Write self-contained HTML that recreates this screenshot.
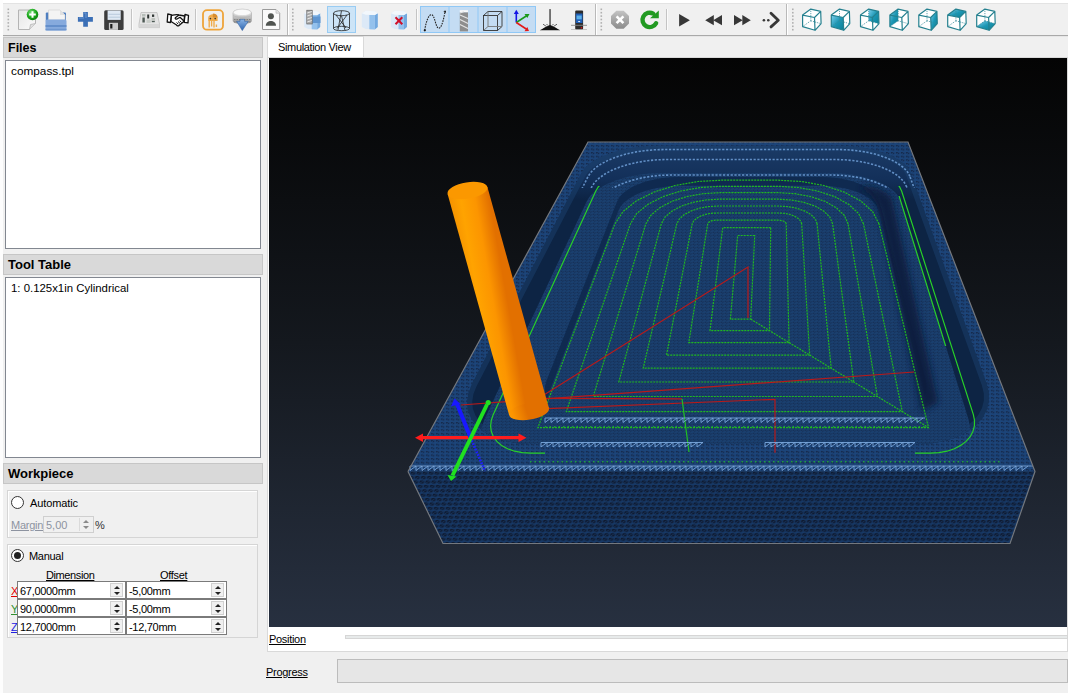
<!DOCTYPE html>
<html><head><meta charset="utf-8">
<style>
*{margin:0;padding:0;box-sizing:border-box}
html,body{width:1068px;height:693px;overflow:hidden;background:#f0f0f0;font-family:"Liberation Sans",sans-serif;font-size:11px;color:#000}
.a{position:absolute}
.t{position:absolute;white-space:pre;line-height:1}
.hdr{position:absolute;background:#d9d9d9;border:1px solid #c6c6c6}
.hdr span{position:absolute;left:4px;top:2px;font-weight:bold;font-size:13px;letter-spacing:0}
.list{position:absolute;background:#fff;border:1px solid #828790}
.grp{position:absolute;border:1px solid #d5d5d5;box-shadow:inset 1px 1px 0 #fff}
.radio{position:absolute;width:13px;height:13px;border-radius:50%;border:1px solid #333;background:#fff}
.spin{position:absolute;height:18px;background:#fff;border:1px solid #7a7a7a}
.spin .tx{position:absolute;left:2px;top:3px;font-size:11px;letter-spacing:-0.3px;white-space:pre}
.sb{position:absolute;right:2px;top:1px;width:13px;height:14px;background:#f0f0f0;border:1px solid #d0d0d0}
.sb:before{content:"";position:absolute;left:3px;top:2px;border-left:3px solid transparent;border-right:3px solid transparent;border-bottom:3px solid #222}
.sb:after{content:"";position:absolute;left:3px;top:8px;border-left:3px solid transparent;border-right:3px solid transparent;border-top:3px solid #222}
.u{text-decoration:underline}
.tb{position:absolute}
</style></head>
<body>
<!-- top strip -->
<div class="a" style="left:0;top:0;width:1068px;height:3px;background:#fff"></div>
<div class="a" style="left:0;top:3px;width:1068px;height:1px;background:#e3e3e3"></div>
<div class="a" style="left:0;top:35px;width:1068px;height:1px;background:#a9a9a9"></div>
<div class="a" style="left:0;top:36px;width:1068px;height:1px;background:#e6e6e6"></div>
<svg class="a" style="left:0;top:0" width="1068" height="36" viewBox="0 0 1068 36">
<defs>
<linearGradient id="gdoc" x1="0" y1="0" x2="1" y2="1"><stop offset="0" stop-color="#e6e6e6"/><stop offset="1" stop-color="#fbfbfb"/></linearGradient>
<radialGradient id="ggreen" cx="0.4" cy="0.35" r="0.7"><stop offset="0" stop-color="#7ee07e"/><stop offset="0.6" stop-color="#19a619"/><stop offset="1" stop-color="#0c7a0c"/></radialGradient>
<linearGradient id="gstop" x1="0" y1="0" x2="0" y2="1"><stop offset="0" stop-color="#c4c4c4"/><stop offset="0.5" stop-color="#a6a6a6"/><stop offset="1" stop-color="#8c8c8c"/></linearGradient>
<linearGradient id="gcube" x1="0" y1="0" x2="1" y2="1"><stop offset="0" stop-color="#7fd0ee"/><stop offset="0.5" stop-color="#1c97b4"/><stop offset="1" stop-color="#0b7f96"/></linearGradient>
<linearGradient id="gdb" x1="0" y1="0" x2="0" y2="1"><stop offset="0" stop-color="#f4f4f4"/><stop offset="0.5" stop-color="#c8c8c8"/><stop offset="1" stop-color="#8a8a8a"/></linearGradient>
<linearGradient id="garrow" x1="0" y1="0" x2="0" y2="1"><stop offset="0" stop-color="#8ab4e4"/><stop offset="1" stop-color="#2d64b0"/></linearGradient>
<linearGradient id="gcyl" x1="0" y1="0" x2="1" y2="0"><stop offset="0" stop-color="#e3eefa"/><stop offset="0.35" stop-color="#d2e4f6"/><stop offset="0.4" stop-color="#9cc6ee"/><stop offset="1" stop-color="#7fb2e6"/></linearGradient>
<g id="grip"><rect x="0" y="0" width="1.6" height="1.6" fill="#b0b0b0"/><rect x="0" y="3.4" width="1.6" height="1.6" fill="#b0b0b0"/><rect x="0" y="6.8" width="1.6" height="1.6" fill="#b0b0b0"/><rect x="0" y="10.2" width="1.6" height="1.6" fill="#b0b0b0"/><rect x="0" y="13.6" width="1.6" height="1.6" fill="#b0b0b0"/><rect x="0" y="17" width="1.6" height="1.6" fill="#b0b0b0"/><rect x="0" y="20.4" width="1.6" height="1.6" fill="#b0b0b0"/></g>
</defs>
<rect x="0" y="4" width="1068" height="31" fill="#f0f0f0"/>
<line x1="287.5" y1="4" x2="287.5" y2="35" stroke="#b9b9b9" stroke-width="1"/><line x1="288.5" y1="4" x2="288.5" y2="35" stroke="#ffffff" stroke-width="1"/>
<line x1="595.5" y1="4" x2="595.5" y2="35" stroke="#b9b9b9" stroke-width="1"/><line x1="596.5" y1="4" x2="596.5" y2="35" stroke="#ffffff" stroke-width="1"/>
<line x1="786.5" y1="4" x2="786.5" y2="35" stroke="#b9b9b9" stroke-width="1"/><line x1="787.5" y1="4" x2="787.5" y2="35" stroke="#ffffff" stroke-width="1"/>
<use href="#grip" x="7.5" y="8.5"/>
<use href="#grip" x="292" y="8.5"/>
<use href="#grip" x="600.5" y="8.5"/>
<use href="#grip" x="792" y="8.5"/>
<line x1="131.5" y1="9" x2="131.5" y2="30" stroke="#c4c4c4" stroke-width="1"/><line x1="132.5" y1="9" x2="132.5" y2="30" stroke="#fbfbfb" stroke-width="1"/>
<line x1="195.5" y1="9" x2="195.5" y2="30" stroke="#c4c4c4" stroke-width="1"/><line x1="196.5" y1="9" x2="196.5" y2="30" stroke="#fbfbfb" stroke-width="1"/>
<line x1="416.5" y1="9" x2="416.5" y2="30" stroke="#c4c4c4" stroke-width="1"/><line x1="417.5" y1="9" x2="417.5" y2="30" stroke="#fbfbfb" stroke-width="1"/>
<line x1="666.5" y1="9" x2="666.5" y2="30" stroke="#c4c4c4" stroke-width="1"/><line x1="667.5" y1="9" x2="667.5" y2="30" stroke="#fbfbfb" stroke-width="1"/>
<path d="M18.5,10 H32 L35.5,13.5 V23.5 L29.5,29.5 H18.5 Z" fill="url(#gdoc)" stroke="#b4b4b4" stroke-width="1"/>
<path d="M29.5,29.5 L30.5,24.5 L35.5,23.5" fill="#e0e0e0" stroke="#b4b4b4" stroke-width="0.8"/>
<circle cx="32.5" cy="14.5" r="5.8" fill="url(#ggreen)"/>
<path d="M32.5,11.2 V17.8 M29.2,14.5 H35.8" stroke="#fff" stroke-width="2"/>
<rect x="45.8" y="12.5" width="20.2" height="9" rx="1" fill="#4f7fc0"/>
<path d="M48.5,10 H60 L65,15 V20 H48.5 Z" fill="#f4f4f4" stroke="#d0d0d0" stroke-width="0.6"/>
<path d="M60,10 V15 H65" fill="#e0e0e0"/>
<rect x="45.5" y="19.6" width="21" height="10.8" rx="1.5" fill="#86aadd"/>
<rect x="45.5" y="25.2" width="21" height="1.6" fill="#5d89c6"/>
<rect x="45.5" y="28.8" width="21" height="1.6" fill="#6f97cf"/>
<path d="M83.2,12 H87.9 V17 H92.9 V21.7 H87.9 V26.7 H83.2 V21.7 H77.9 V17 H83.2 Z" fill="#3b6fb6"/>
<path d="M84,13 H86 V18 M79,18 H84" stroke="#7aa2d8" stroke-width="0.8" fill="none"/>
<rect x="104.2" y="10.2" width="19.4" height="19.7" rx="1.5" fill="#3c3c3c"/>
<rect x="107.6" y="10.5" width="13.1" height="9.4" fill="#dfe9f4"/>
<path d="M108.5,14.3 H120 M108.5,17.2 H120" stroke="#a9bdd3" stroke-width="0.7"/>
<rect x="108.9" y="22.8" width="9.1" height="7.1" fill="#c9c9c9"/>
<rect x="110.2" y="24" width="2.2" height="4.5" fill="#1a1a1a"/>
<path d="M141,12.5 H157 L159.5,24 V27.6 H139 V24 Z" fill="#e4e4e4" stroke="#b8b8b8" stroke-width="0.7"/>
<rect x="139" y="24" width="20.5" height="3.6" fill="#d6d6d6"/>
<rect x="142" y="14" width="3.5" height="2.5" fill="#b7beb9"/><rect x="142.4" y="17.5" width="2.4" height="5" fill="#4e5a55"/>
<rect x="147.2" y="14.5" width="2" height="4" fill="#2f3533"/><rect x="146.5" y="19.5" width="4.2" height="3.4" fill="#c8ccc8"/>
<rect x="152" y="14.5" width="2.2" height="2.4" fill="#2f3533"/><rect x="151.5" y="18" width="3.6" height="3" fill="#c0c4c0"/><rect x="151.8" y="21" width="3" height="1.2" fill="#4e5a55"/>
<g fill="#fff" stroke="#111" stroke-width="1.3" stroke-linejoin="round">
<path d="M167.8,14 L171.5,14.8 L170.5,22.5 L167.2,22 Z"/>
<path d="M188.5,15.4 L185,14.5 L184.2,22.3 L188,22.8 Z"/>
<path d="M171.4,15.5 C174,15 176,14.2 179,15 L184.6,16 L183.8,21.5 L179,25.5 C178,26.3 176.8,25.8 176.6,25 L171,21.5 Z"/>
<path d="M179,15 L175.3,17.8 C174.8,18.6 176,19.5 177,19 L180,17.3 L184.5,21.5" fill="none"/>
<path d="M176.5,22.5 L178.2,24 M178,21.5 L180,23.4 M179.6,20.5 L181.5,22.4" fill="none" stroke-width="1"/>
</g>
<rect x="203" y="10.1" width="20" height="19.6" rx="4" fill="none" stroke="#eea43a" stroke-width="1.8"/>
<path d="M208.2,17.8 C208.2,13 217.6,13 217.6,17.8 Z" fill="#f0ab4a"/>
<path d="M212.9,13.6 C215.5,13.6 217.6,15 217.6,17.8 H212.9 Z" fill="#d88d2e"/>
<rect x="208.2" y="17.6" width="9.4" height="3.4" fill="#f0ab4a"/>
<circle cx="210.4" cy="18.6" r="0.8" fill="#333"/><circle cx="215.2" cy="18.6" r="0.8" fill="#333"/>
<path d="M209.2,21 V27.5 M211.6,21 V26.5 M214,21 V27.5 M216.4,24.5 V27" stroke="#f0ab4a" stroke-width="1.4"/>
<path d="M233,13 C233,8 251.5,8 251.5,13 V21 C251.5,24.5 233,24.5 233,21 Z" fill="url(#gdb)" stroke="#a8a8a8" stroke-width="0.6"/>
<ellipse cx="242.2" cy="12.4" rx="8.8" ry="3.2" fill="#fafafa" stroke="#cfcfcf" stroke-width="0.5"/>
<path d="M233.3,15.5 C236,18 248.5,18 251.2,15.5" fill="none" stroke="#b5b5b5" stroke-width="0.7"/>
<path d="M234,19.5 H250.5 M234,22 H250.5" stroke="#777" stroke-width="0.8" stroke-dasharray="1.5,1"/>
<path d="M240,19.3 H244.6 V21.3 H248.3 L242.3,30.6 L236.6,21.3 H240 Z" fill="url(#garrow)" stroke="#2a5a9e" stroke-width="0.5"/>
<path d="M262.5,9.5 H276 L279.7,13.2 V29.5 H262.5 Z" fill="#fafafa" stroke="#9a9a9a" stroke-width="1"/>
<path d="M276,9.5 V13.2 H279.7" fill="#e6e6e6" stroke="#b0b0b0" stroke-width="0.6"/>
<circle cx="270.9" cy="16.2" r="3" fill="#505450"/>
<path d="M265.8,25.8 C265.8,19.5 276,19.5 276,25.8 Z" fill="#505450"/>
<path d="M304.2,13.3 L308.2,10.8 L317.2,11.3 L320.2,13.3 V26.9 L317.2,29.4 L308.2,28.9 L304.2,26.9 Z" fill="#dce9f7"/><path d="M311.7,15.0 H317.2 V29.4 L311.7,29.2 Z" fill="#94c1ec"/><path d="M317.2,15.0 L320.2,13.3 V26.9 L317.2,29.4 Z" fill="#73a9df"/><path d="M304.2,13.3 L308.2,10.8 L317.2,11.3 L320.2,13.3 L317.2,15.0 L308.2,14.8 Z" fill="#f2f7fc"/>
<rect x="312.5" y="16.5" width="8" height="6.5" fill="#5f95d0"/>
<rect x="306.8" y="10.2" width="5.4" height="13.8" fill="#a9a9a9" stroke="#555" stroke-width="0.6"/>
<path d="M307.2,13 L311.8,11.5 M307.2,16 L311.8,14.5 M307.2,19 L311.8,17.5 M307.2,22 L311.8,20.5" stroke="#eee" stroke-width="0.9"/>
<rect x="327.5" y="6.5" width="28" height="26" fill="#cce4f7" stroke="#99ccf3" stroke-width="1"/>
<g fill="none" stroke="#222" stroke-width="0.8"><ellipse cx="341.5" cy="13.2" rx="8" ry="2.5"/><ellipse cx="341.5" cy="28.5" rx="8" ry="2.2"/><path d="M333.5,13.2 V28.5 M349.5,13.2 V28.5 M336,15 L346,28 M347,15 L337,28.5 M341.5,10.7 L338,30 M341.5,15.7 L345,30.5"/></g>
<path d="M361.8,13.3 L365.8,10.8 L374.8,11.3 L377.8,13.3 V26.9 L374.8,29.4 L365.8,28.9 L361.8,26.9 Z" fill="#dce9f7"/><path d="M369.3,15.0 H374.8 V29.4 L369.3,29.2 Z" fill="#94c1ec"/><path d="M374.8,15.0 L377.8,13.3 V26.9 L374.8,29.4 Z" fill="#73a9df"/><path d="M361.8,13.3 L365.8,10.8 L374.8,11.3 L377.8,13.3 L374.8,15.0 L365.8,14.8 Z" fill="#f2f7fc"/>
<path d="M391.0,13.3 L395.0,10.8 L404.0,11.3 L407.0,13.3 V26.9 L404.0,29.4 L395.0,28.9 L391.0,26.9 Z" fill="#dce9f7"/><path d="M398.5,15.0 H404.0 V29.4 L398.5,29.2 Z" fill="#94c1ec"/><path d="M404.0,15.0 L407.0,13.3 V26.9 L404.0,29.4 Z" fill="#73a9df"/><path d="M391.0,13.3 L395.0,10.8 L404.0,11.3 L407.0,13.3 L404.0,15.0 L395.0,14.8 Z" fill="#f2f7fc"/>
<path d="M395.5,17.3 L402.3,24.3 M402.3,17.3 L395.5,24.3" stroke="#d0102a" stroke-width="2"/>
<rect x="420.5" y="6.5" width="115" height="26" fill="#c4dcf3" stroke="#90c8f6" stroke-width="1"/>
<line x1="449" y1="6.5" x2="449" y2="32.5" stroke="#90c8f6" stroke-width="1"/>
<line x1="478" y1="6.5" x2="478" y2="32.5" stroke="#90c8f6" stroke-width="1"/>
<line x1="507" y1="6.5" x2="507" y2="32.5" stroke="#90c8f6" stroke-width="1"/>
<path d="M424.7,30.4 C426,22 428.5,14.5 431.5,14.7 C435,15 435.5,28.2 438.8,28.2 C442,28.2 444,17 445,12" fill="none" stroke="#222" stroke-width="1.1" stroke-dasharray="1.6,1"/>
<circle cx="424.8" cy="30.3" r="1.1" fill="#111"/><path d="M443.8,11.5 L445.5,11 L445,13" stroke="#111" stroke-width="1" fill="none"/>
<rect x="459.8" y="10.2" width="8.2" height="2.2" fill="#fafafa"/>
<rect x="459.8" y="12.4" width="8.2" height="19" fill="#8e8e8e"/>
<path d="M460,15 L468,18.5 M460,19.5 L468,23.5 M460,24.5 L468,28.5 M460,13 L464,11.5" stroke="#e6e6e6" stroke-width="1.1"/>
<g fill="none" stroke="#333" stroke-width="0.9"><rect x="483.5" y="15.5" width="14" height="15"/><path d="M483.5,15.5 L488,11.5 H502 V26.5 L497.5,30.5 M497.5,15.5 L502,11.5"/><path d="M488,11.5 V26.5 H502 M488,26.5 L483.5,30.5" stroke="#777"/></g>
<path d="M516.3,22.5 V12.5" stroke="#1515e6" stroke-width="1.6"/><path d="M513.8,14 L516.3,9.8 L518.8,14 Z" fill="#1515e6"/>
<path d="M516.3,22.5 L527,15.5" stroke="#1a9a1a" stroke-width="1.6"/><path d="M524.5,14 L529.5,14 L527.3,18 Z" fill="#1a9a1a"/>
<path d="M516.3,22.5 L527,29.5" stroke="#e21a1a" stroke-width="1.6"/><path d="M524.5,31.2 L529,31 L527.3,27 Z" fill="#e21a1a"/>
<rect x="549.1" y="9.1" width="1.9" height="17" fill="#707070"/>
<path d="M539.8,30.2 C543,28.5 546,26.5 550,25 C554,26.5 557,28.5 560.2,30.2 Z" fill="#111"/>
<path d="M543,24.2 L546.5,26.5 M557,24.2 L553.5,26.5 M546.5,24 L548,25.5 M553.5,24 L552,25.5" stroke="#222" stroke-width="0.7"/>
<rect x="575.2" y="10.5" width="7.9" height="19" rx="1" fill="#2c2c2c"/>
<rect x="575.8" y="13.5" width="6.7" height="9.5" fill="#1f5fb8"/><rect x="576.6" y="15.5" width="5.1" height="3.8" fill="#5cb0e8"/><path d="M577.8,21 H580.5 L579.1,22.3 Z" fill="#fff"/>
<path d="M571,25.3 H587" stroke="#888" stroke-width="0.9"/><path d="M571,29.5 H587" stroke="#aaa" stroke-width="0.6"/>
<rect x="580.8" y="27" width="1.4" height="1.5" fill="#d01010"/>
<polygon points="616.3,10.8 623.7,10.8 629,16.1 629,23.5 623.7,28.8 616.3,28.8 611,23.5 611,16.1" fill="url(#gstop)"/>
<path d="M616.6,16.4 L623.4,23.2 M623.4,16.4 L616.6,23.2" stroke="#fff" stroke-width="2.6"/>
<path d="M656.1,23.2 A7.2,7.2 0 1 1 653.2,13.6" fill="none" stroke="#229a22" stroke-width="4.4" stroke-linecap="round"/>
<path d="M658.8,10.5 L658.8,18.2 L650,18.2 Z" fill="#229a22"/>
<polygon points="679.1,14 679.1,26.5 689.9,20.2" fill="#373737"/>
<polygon points="705.2,20.2 713.8,15.1 713.8,25.3" fill="#373737"/><polygon points="713.2,20.2 722,15.1 722,25.3" fill="#373737"/>
<polygon points="734,15.1 734,25.3 742.7,20.2" fill="#373737"/><polygon points="742.3,15.1 742.3,25.3 750.8,20.2" fill="#373737"/>
<circle cx="763.9" cy="20.2" r="1.3" fill="#373737"/><circle cx="768.3" cy="20.2" r="1.3" fill="#373737"/>
<path d="M771,13.3 L778.3,20.2 L771,26.9" fill="none" stroke="#373737" stroke-width="2.8" stroke-linecap="round" stroke-linejoin="round"/>
<polygon points="802.6,15.1 810.8,9.1 820.7,11.4 821.1,23.7 815.0,30.3 802.6,26.6" fill="#fff"/>
<path d="M810.8,20.8 L810.8,9.1 M810.8,20.8 L802.6,26.6 M810.8,20.8 L821.1,23.7" stroke="#3a8b9b" stroke-width="0.8" stroke-dasharray="1.2,1" fill="none"/>
<path d="M802.6,15.1 L810.8,9.1 L820.7,11.4 L814.5,17.5 Z M802.6,15.1 L802.6,26.6 L815.0,30.3 L821.1,23.7 M820.7,11.4 L821.1,23.7 M814.5,17.5 L815.0,30.3" stroke="#25808f" stroke-width="1.2" fill="none" stroke-linejoin="round"/>
<polygon points="831.3,15.1 839.5,9.1 849.4,11.4 849.8,23.7 843.7,30.3 831.3,26.6" fill="#fff"/>
<polygon points="831.3,15.1 843.2,17.5 843.7,30.3 831.3,26.6" fill="url(#gcube)"/>
<path d="M839.5,20.8 L839.5,9.1 M839.5,20.8 L831.3,26.6 M839.5,20.8 L849.8,23.7" stroke="#3a8b9b" stroke-width="0.8" stroke-dasharray="1.2,1" fill="none"/>
<path d="M831.3,15.1 L839.5,9.1 L849.4,11.4 L843.2,17.5 Z M831.3,15.1 L831.3,26.6 L843.7,30.3 L849.8,23.7 M849.4,11.4 L849.8,23.7 M843.2,17.5 L843.7,30.3" stroke="#25808f" stroke-width="1.2" fill="none" stroke-linejoin="round"/>
<polygon points="860.5,15.1 868.7,9.1 878.6,11.4 879.0,23.7 872.9,30.3 860.5,26.6" fill="#fff"/>
<polygon points="868.7,9.1 878.6,11.4 879.0,23.7 868.7,20.8" fill="url(#gcube)"/>
<path d="M868.7,20.8 L868.7,9.1 M868.7,20.8 L860.5,26.6 M868.7,20.8 L879.0,23.7" stroke="#3a8b9b" stroke-width="0.8" stroke-dasharray="1.2,1" fill="none"/>
<path d="M860.5,15.1 L868.7,9.1 L878.6,11.4 L872.4,17.5 Z M860.5,15.1 L860.5,26.6 L872.9,30.3 L879.0,23.7 M878.6,11.4 L879.0,23.7 M872.4,17.5 L872.9,30.3" stroke="#25808f" stroke-width="1.2" fill="none" stroke-linejoin="round"/>
<polygon points="889.9,15.1 898.1,9.1 908.0,11.4 908.4,23.7 902.3,30.3 889.9,26.6" fill="#fff"/>
<polygon points="889.9,15.1 898.1,9.1 898.1,20.8 889.9,26.6" fill="url(#gcube)"/>
<path d="M898.1,20.8 L898.1,9.1 M898.1,20.8 L889.9,26.6 M898.1,20.8 L908.4,23.7" stroke="#3a8b9b" stroke-width="0.8" stroke-dasharray="1.2,1" fill="none"/>
<path d="M889.9,15.1 L898.1,9.1 L908.0,11.4 L901.8,17.5 Z M889.9,15.1 L889.9,26.6 L902.3,30.3 L908.4,23.7 M908.0,11.4 L908.4,23.7 M901.8,17.5 L902.3,30.3" stroke="#25808f" stroke-width="1.2" fill="none" stroke-linejoin="round"/>
<polygon points="918.8,15.1 927.0,9.1 936.9,11.4 937.3,23.7 931.2,30.3 918.8,26.6" fill="#fff"/>
<polygon points="930.7,17.5 936.9,11.4 937.3,23.7 931.2,30.3" fill="url(#gcube)"/>
<path d="M927.0,20.8 L927.0,9.1 M927.0,20.8 L918.8,26.6 M927.0,20.8 L937.3,23.7" stroke="#3a8b9b" stroke-width="0.8" stroke-dasharray="1.2,1" fill="none"/>
<path d="M918.8,15.1 L927.0,9.1 L936.9,11.4 L930.7,17.5 Z M918.8,15.1 L918.8,26.6 L931.2,30.3 L937.3,23.7 M936.9,11.4 L937.3,23.7 M930.7,17.5 L931.2,30.3" stroke="#25808f" stroke-width="1.2" fill="none" stroke-linejoin="round"/>
<polygon points="947.7,15.1 955.9,9.1 965.8,11.4 966.2,23.7 960.1,30.3 947.7,26.6" fill="#fff"/>
<polygon points="947.7,15.1 955.9,9.1 965.8,11.4 959.6,17.5" fill="url(#gcube)"/>
<path d="M955.9,20.8 L955.9,9.1 M955.9,20.8 L947.7,26.6 M955.9,20.8 L966.2,23.7" stroke="#3a8b9b" stroke-width="0.8" stroke-dasharray="1.2,1" fill="none"/>
<path d="M947.7,15.1 L955.9,9.1 L965.8,11.4 L959.6,17.5 Z M947.7,15.1 L947.7,26.6 L960.1,30.3 L966.2,23.7 M965.8,11.4 L966.2,23.7 M959.6,17.5 L960.1,30.3" stroke="#25808f" stroke-width="1.2" fill="none" stroke-linejoin="round"/>
<polygon points="976.7,15.1 984.9,9.1 994.8,11.4 995.2,23.7 989.1,30.3 976.7,26.6" fill="#fff"/>
<polygon points="976.7,26.6 984.9,20.8 995.2,23.7 989.1,30.3" fill="url(#gcube)"/>
<path d="M984.9,20.8 L984.9,9.1 M984.9,20.8 L976.7,26.6 M984.9,20.8 L995.2,23.7" stroke="#3a8b9b" stroke-width="0.8" stroke-dasharray="1.2,1" fill="none"/>
<path d="M976.7,15.1 L984.9,9.1 L994.8,11.4 L988.6,17.5 Z M976.7,15.1 L976.7,26.6 L989.1,30.3 L995.2,23.7 M994.8,11.4 L995.2,23.7 M988.6,17.5 L989.1,30.3" stroke="#25808f" stroke-width="1.2" fill="none" stroke-linejoin="round"/>
</svg>

<!-- left dock -->
<div class="a" style="left:0;top:0;width:3px;height:693px;background:#fdfdfd"></div>
<div class="hdr" style="left:3px;top:37px;width:260px;height:21px"><span style="top:3px;font-size:12.5px">Files</span></div>
<div class="list" style="left:5px;top:60px;width:256px;height:189px"><span class="t" style="left:5px;top:5px;font-size:11.8px">compass.tpl</span></div>
<div class="hdr" style="left:3px;top:254px;width:260px;height:21px"><span>Tool Table</span></div>
<div class="list" style="left:5px;top:277px;width:256px;height:181px"><span class="t" style="left:5px;top:5px;font-size:11.4px">1: 0.125x1in Cylindrical</span></div>
<div class="hdr" style="left:3px;top:463px;width:260px;height:21px"><span>Workpiece</span></div>

<div class="grp" style="left:7px;top:490px;width:251px;height:48px"></div>
<div class="radio" style="left:11px;top:496px"></div>
<span class="t" style="left:30px;top:498px;font-size:11px;letter-spacing:-0.1px">Automatic</span>
<span class="t u" style="left:11px;top:520px;color:#8d93a0;letter-spacing:-0.25px">Margin</span>
<div class="a" style="left:43px;top:516px;width:51px;height:17px;border:1px solid #cfcfcf;background:#f0f0f0"><div class="a" style="left:35px;top:1px;width:13px;height:13px;border-left:1px solid #dadada"><div class="a" style="left:3px;top:2px;border-left:3px solid transparent;border-right:3px solid transparent;border-bottom:3px solid #8a8a8a"></div><div class="a" style="left:3px;top:8px;border-left:3px solid transparent;border-right:3px solid transparent;border-top:3px solid #8a8a8a"></div></div></div>
<span class="t" style="left:46px;top:520px;color:#8d93a0">5,00</span>
<span class="t" style="left:95px;top:520px;color:#333">%</span>

<div class="grp" style="left:7px;top:544px;width:251px;height:94px"></div>
<div class="radio" style="left:11px;top:549px"><div class="a" style="left:2px;top:2px;width:7px;height:7px;border-radius:50%;background:#222"></div></div>
<span class="t" style="left:29px;top:551px;letter-spacing:-0.3px">Manual</span>
<span class="t u" style="left:46px;top:570px;letter-spacing:-0.4px">Dimension</span>
<span class="t u" style="left:160px;top:570px;letter-spacing:-0.3px">Offset</span>
<span class="t u" style="left:11px;top:586px;color:#e00000">X</span>
<span class="t u" style="left:11px;top:604px;color:#2f8f2f">Y</span>
<span class="t u" style="left:11px;top:622px;color:#2020e0">Z</span>
<div class="spin" style="left:17px;top:581px;width:109px"><span class="tx">67,0000mm</span><div class="sb"></div></div>
<div class="spin" style="left:17px;top:599px;width:109px"><span class="tx">90,0000mm</span><div class="sb"></div></div>
<div class="spin" style="left:17px;top:617px;width:109px"><span class="tx">12,7000mm</span><div class="sb"></div></div>
<div class="spin" style="left:126px;top:581px;width:101px"><span class="tx">-5,00mm</span><div class="sb"></div></div>
<div class="spin" style="left:126px;top:599px;width:101px"><span class="tx">-5,00mm</span><div class="sb"></div></div>
<div class="spin" style="left:126px;top:617px;width:101px"><span class="tx">-12,70mm</span><div class="sb"></div></div>

<!-- right area -->
<div class="a" style="left:267px;top:36px;width:97px;height:22px;background:#fff;border:1px solid #d9d9d9;border-bottom:none"></div>
<span class="t" style="left:278px;top:42px;font-size:11px;letter-spacing:-0.35px">Simulation View</span>
<div class="a" style="left:267px;top:57px;width:801px;height:595px;background:#fff;border:1px solid #d9d9d9"></div>
<svg class="a" style="left:269px;top:58px" width="798" height="569" viewBox="269 58 798 569">
<defs>
<linearGradient id="bg" x1="0" y1="0" x2="0" y2="1"><stop offset="0" stop-color="#040404"/><stop offset="0.5" stop-color="#14181e"/><stop offset="1" stop-color="#273040"/></linearGradient>
<linearGradient id="cyl" x1="0" y1="0" x2="1" y2="0"><stop offset="0" stop-color="#f08a00"/><stop offset="0.3" stop-color="#ffa200"/><stop offset="0.7" stop-color="#fb9000"/><stop offset="1" stop-color="#e06a00"/></linearGradient>
<pattern id="mesh" width="4" height="3" patternUnits="userSpaceOnUse"><rect width="4" height="3" fill="#1a4070"/><path d="M0.7,0.7 L2.9,0.7 L0.7,2.3 Z M3.5,1.0 L3.5,2.6 L1.6,2.6 Z" fill="#142b50"/></pattern>
<pattern id="meshT" width="5" height="3.6" patternUnits="userSpaceOnUse"><rect width="5" height="3.6" fill="#1c457a"/><path d="M0.9,0.9 L3.7,0.9 L0.9,2.8 Z M4.3,1.1 L4.3,3.0 L1.9,3.0 Z" fill="#15294b"/></pattern>
<pattern id="meshF" width="6" height="4.4" patternUnits="userSpaceOnUse" patternTransform="skewX(-20)"><rect width="6" height="4.4" fill="#173967"/><path d="M0.8,0.8 L4.9,0.8 L0.8,3.8 Z M5.5,1.1 L5.5,4.0 L1.8,4.0 Z" fill="#0f1a30"/></pattern>
</defs>
<rect x="269" y="58" width="798" height="569" fill="url(#bg)"/>
<polygon points="408,471.5 1035,471.5 1010,543.5 443,543.5" fill="url(#meshF)"/>
<polygon points="588,142 908,142 1035,471.5 408,471.5" fill="url(#meshT)"/>
<linearGradient id="wallg" gradientUnits="userSpaceOnUse" x1="0" y1="146" x2="0" y2="200"><stop offset="0" stop-color="#1b3b66"/><stop offset="0.6" stop-color="#13305a"/><stop offset="1" stop-color="#0d2444"/></linearGradient>
<clipPath id="c0"><path d="M910.4,172.5 L908.0,168.1 L904.0,163.8 L898.7,159.9 L892.2,156.3 L884.7,153.2 L876.3,150.6 L867.2,148.5 L857.7,147.0 L847.9,146.1 L838.0,145.8 L658.4,145.8 L648.4,146.1 L638.5,147.0 L628.7,148.5 L619.3,150.6 L610.5,153.2 L602.5,156.3 L595.4,159.9 L589.5,163.8 L584.9,168.1 L581.7,172.5 L472.0,384.1 L468.6,392.7 L467.2,401.4 L467.9,409.9 L471.0,417.9 L476.2,425.2 L483.7,431.6 L493.1,436.9 L504.4,440.8 L517.0,443.2 L530.7,444.0 L918.5,444.0 L932.3,443.2 L945.4,440.8 L957.2,436.9 L967.5,431.6 L975.9,425.2 L982.4,417.9 L986.7,409.9 L988.8,401.4 L988.8,392.7 L986.7,384.1 Z"/></clipPath>
<path d="M910.4,172.5 L908.0,168.1 L904.0,163.8 L898.7,159.9 L892.2,156.3 L884.7,153.2 L876.3,150.6 L867.2,148.5 L857.7,147.0 L847.9,146.1 L838.0,145.8 L658.4,145.8 L648.4,146.1 L638.5,147.0 L628.7,148.5 L619.3,150.6 L610.5,153.2 L602.5,156.3 L595.4,159.9 L589.5,163.8 L584.9,168.1 L581.7,172.5 L472.0,384.1 L468.6,392.7 L467.2,401.4 L467.9,409.9 L471.0,417.9 L476.2,425.2 L483.7,431.6 L493.1,436.9 L504.4,440.8 L517.0,443.2 L530.7,444.0 L918.5,444.0 L932.3,443.2 L945.4,440.8 L957.2,436.9 L967.5,431.6 L975.9,425.2 L982.4,417.9 L986.7,409.9 L988.8,401.4 L988.8,392.7 L986.7,384.1 Z" fill="url(#wallg)"/>
<path d="M910.4,172.5 L908.0,168.1 L904.0,163.8 L898.7,159.9 L892.2,156.3 L884.7,153.2 L876.3,150.6 L867.2,148.5 L857.7,147.0 L847.9,146.1 L838.0,145.8 L658.4,145.8 L648.4,146.1 L638.5,147.0 L628.7,148.5 L619.3,150.6 L610.5,153.2 L602.5,156.3 L595.4,159.9 L589.5,163.8 L584.9,168.1 L581.7,172.5 L472.0,384.1 L468.6,392.7 L467.2,401.4 L467.9,409.9 L471.0,417.9 L476.2,425.2 L483.7,431.6 L493.1,436.9 L504.4,440.8 L517.0,443.2 L530.7,444.0 L918.5,444.0 L932.3,443.2 L945.4,440.8 L957.2,436.9 L967.5,431.6 L975.9,425.2 L982.4,417.9 L986.7,409.9 L988.8,401.4 L988.8,392.7 L986.7,384.1 Z" fill="none" stroke="#1d4474" stroke-width="10" opacity="0.45" clip-path="url(#c0)"/>
<path d="M900.6,200.9 L898.4,196.3 L894.7,191.8 L889.6,187.7 L883.3,184.0 L876.1,180.7 L867.9,177.9 L859.2,175.8 L849.9,174.2 L840.4,173.2 L830.7,172.9 L661.3,172.9 L651.6,173.2 L641.9,174.2 L632.4,175.8 L623.3,177.9 L614.7,180.7 L606.9,184.0 L600.1,187.7 L594.3,191.8 L589.9,196.3 L586.9,200.9 L484.6,419.1 L481.5,427.9 L480.3,436.6 L481.2,445.2 L484.3,453.3 L489.5,460.7 L496.7,467.2 L505.9,472.5 L516.6,476.4 L528.8,478.8 L541.9,479.7 L901.6,479.7 L914.8,478.8 L927.3,476.4 L938.7,472.5 L948.7,467.2 L957.0,460.7 L963.3,453.3 L967.7,445.2 L970.0,436.6 L970.2,427.9 L968.4,419.1 Z" fill="url(#mesh)" clip-path="url(#c0)"/>
<clipPath id="c1"><path d="M879.4,200.9 L877.7,197.0 L874.7,193.2 L870.6,189.7 L865.4,186.5 L859.3,183.7 L852.5,181.3 L845.1,179.4 L837.2,178.1 L829.1,177.2 L820.9,176.9 L679.1,176.9 L670.8,177.2 L662.6,178.1 L654.5,179.4 L646.8,181.3 L639.7,183.7 L633.2,186.5 L627.6,189.7 L623.0,193.2 L619.5,197.0 L617.3,200.9 L546.7,380.3 L545.0,386.5 L544.8,392.6 L546.1,398.5 L549.0,404.1 L553.4,409.1 L559.1,413.5 L566.2,417.1 L574.4,419.7 L583.4,421.3 L593.0,421.9 L873.7,421.9 L883.4,421.3 L892.6,419.7 L901.2,417.1 L908.7,413.5 L915.1,409.1 L920.1,404.1 L923.8,398.5 L925.9,392.6 L926.5,386.5 L925.7,380.3 Z"/></clipPath>
<path d="M879.4,200.9 L877.7,197.0 L874.7,193.2 L870.6,189.7 L865.4,186.5 L859.3,183.7 L852.5,181.3 L845.1,179.4 L837.2,178.1 L829.1,177.2 L820.9,176.9 L679.1,176.9 L670.8,177.2 L662.6,178.1 L654.5,179.4 L646.8,181.3 L639.7,183.7 L633.2,186.5 L627.6,189.7 L623.0,193.2 L619.5,197.0 L617.3,200.9 L546.7,380.3 L545.0,386.5 L544.8,392.6 L546.1,398.5 L549.0,404.1 L553.4,409.1 L559.1,413.5 L566.2,417.1 L574.4,419.7 L583.4,421.3 L593.0,421.9 L873.7,421.9 L883.4,421.3 L892.6,419.7 L901.2,417.1 L908.7,413.5 L915.1,409.1 L920.1,404.1 L923.8,398.5 L925.9,392.6 L926.5,386.5 L925.7,380.3 Z" fill="#0f2a50" clip-path="url(#c0)"/>
<path d="M878.5,210.1 L876.8,206.1 L873.8,202.2 L869.8,198.7 L864.6,195.4 L858.6,192.6 L851.8,190.2 L844.5,188.3 L836.7,186.9 L828.6,186.0 L820.5,185.7 L679.9,185.7 L671.7,186.0 L663.5,186.9 L655.5,188.3 L647.9,190.2 L640.8,192.6 L634.4,195.4 L628.9,198.7 L624.3,202.2 L620.9,206.1 L618.7,210.1 L549.6,391.2 L548.0,397.3 L547.8,403.5 L549.1,409.4 L552.0,415.0 L556.3,420.1 L562.1,424.5 L569.0,428.1 L577.1,430.7 L586.0,432.4 L595.5,432.9 L872.3,432.9 L881.9,432.4 L891.0,430.7 L899.4,428.1 L906.9,424.5 L913.2,420.1 L918.2,415.0 L921.8,409.4 L923.9,403.5 L924.5,397.3 L923.7,391.2 Z" fill="url(#mesh)" clip-path="url(#c1)"/>
<linearGradient id="rb" gradientUnits="userSpaceOnUse" x1="900" y1="0" x2="930" y2="0"><stop offset="0" stop-color="#0e2546" stop-opacity="0.3"/><stop offset="0.5" stop-color="#0c2141"/><stop offset="1" stop-color="#0e2648" stop-opacity="0.6"/></linearGradient>
<filter id="blr" x="-50%" y="-10%" width="200%" height="120%"><feGaussianBlur stdDeviation="3"/></filter>
<path d="M862,186 C875,186 886,190 892,198 L938,402 L922,412 L880,215 C876,200 870,192 862,190 Z" fill="#0b1f3d" opacity="0.9" filter="url(#blr)"/>
<clipPath id="cb"><rect x="560" y="140" width="380" height="48"/></clipPath>
<g clip-path="url(#cb)" fill="none" stroke="#6f9fd8" stroke-width="1.6" stroke-dasharray="2.2,1.6" opacity="0.85">
<path d="M909.9,176.4 L907.5,171.9 L903.6,167.6 L898.3,163.7 L891.8,160.1 L884.3,157.0 L875.9,154.3 L866.9,152.2 L857.4,150.7 L847.6,149.8 L837.8,149.5 L664.1,149.5 L654.2,149.8 L644.3,150.7 L634.6,152.2 L625.2,154.3 L616.5,157.0 L608.5,160.1 L601.5,163.7 L595.7,167.6 L591.2,171.9 L588.1,176.4 L482.7,389.0 L479.4,397.6 L478.2,406.3 L479.1,414.8 L482.2,422.8 L487.6,430.1 L495.1,436.6 L504.6,441.8 L515.8,445.7 L528.5,448.1 L542.1,448.9 L917.6,448.9 L931.3,448.1 L944.3,445.7 L956.1,441.8 L966.3,436.6 L974.7,430.1 L981.1,422.8 L985.4,414.8 L987.5,406.3 L987.5,397.6 L985.4,389.0 Z"/>
<path d="M906.7,187.0 L904.3,182.4 L900.5,178.1 L895.3,174.0 L888.8,170.3 L881.4,167.1 L873.1,164.4 L864.1,162.3 L854.7,160.7 L845.0,159.8 L835.2,159.5 L666.9,159.5 L657.0,159.8 L647.2,160.7 L637.6,162.3 L628.3,164.4 L619.7,167.1 L611.8,170.3 L604.9,174.0 L599.1,178.1 L594.6,182.4 L591.7,187.0 L490.4,400.8 L487.3,409.5 L486.2,418.2 L487.2,426.7 L490.4,434.8 L495.8,442.2 L503.3,448.6 L512.7,453.9 L523.8,457.8 L536.2,460.2 L549.7,461.0 L911.4,461.0 L924.9,460.2 L937.7,457.8 L949.3,453.9 L959.5,448.6 L967.8,442.2 L974.2,434.8 L978.5,426.7 L980.7,418.2 L980.8,409.5 L978.8,400.8 Z"/>
<path d="M902.2,203.4 L899.9,198.7 L896.1,194.2 L891.0,190.0 L884.7,186.2 L877.4,182.9 L869.2,180.1 L860.3,177.9 L851.0,176.3 L841.4,175.3 L831.8,175.0 L670.8,175.0 L661.1,175.3 L651.4,176.3 L641.8,177.9 L632.7,180.1 L624.2,182.9 L616.4,186.2 L609.6,190.0 L604.0,194.2 L599.6,198.7 L596.7,203.4 L501.4,419.1 L498.5,427.9 L497.6,436.6 L498.7,445.2 L502.0,453.3 L507.4,460.7 L514.8,467.2 L524.1,472.5 L535.0,476.4 L547.2,478.8 L560.3,479.7 L902.9,479.7 L916.1,478.8 L928.6,476.4 L940.0,472.5 L950.0,467.2 L958.2,460.7 L964.6,453.3 L968.9,445.2 L971.2,436.6 L971.4,427.9 L969.6,419.1 Z"/>
</g>
<g fill="none" stroke="#20b820" stroke-width="1.2" stroke-dasharray="2,1" clip-path="url(#c0)">
<clipPath id="cl"><rect x="400" y="186" width="145" height="300"/><rect x="915" y="186" width="145" height="300"/><rect x="400" y="186" width="660" height="254"/></clipPath>
</g>
<g fill="none" stroke-width="1.2">
<path d="M901.6,191.0 L899.5,186.7 L896.0,182.7 L891.3,178.9 L885.4,175.5 L878.6,172.5 L871.0,170.0 L862.8,168.0 L854.1,166.6 L845.2,165.7 L836.2,165.4 L664.6,165.4 L655.6,165.7 L646.6,166.6 L637.7,168.0 L629.2,170.0 L621.3,172.5 L614.0,175.5 L607.7,178.9 L602.5,182.7 L598.4,186.7 L595.8,191.0 L493.3,414.4 L491.3,420.2 L490.6,425.9 L491.3,431.5 L493.4,436.7 L496.9,441.4 L501.6,445.4 L507.6,448.8 L514.5,451.2 L522.4,452.7 L530.8,453.2 L930.5,453.2 L939.0,452.7 L947.0,451.2 L954.4,448.8 L960.7,445.4 L966.1,441.4 L970.2,436.7 L972.9,431.5 L974.4,425.9 L974.5,420.2 L973.3,414.4 Z" clip-path="url(#cl)" stroke-dasharray="none" stroke="#28d028"/>
<clipPath id="cr"><rect x="880" y="196" width="180" height="150"/></clipPath>
<path d="M898.1,192.8 L896.0,188.5 L892.5,184.4 L887.8,180.6 L882.0,177.2 L875.1,174.2 L867.5,171.7 L859.3,169.6 L850.6,168.2 L841.7,167.3 L832.6,167.0 L668.0,167.0 L658.9,167.3 L649.8,168.2 L641.0,169.6 L632.4,171.7 L624.5,174.2 L617.3,177.2 L610.9,180.6 L605.7,184.4 L601.7,188.5 L599.0,192.8 L516.7,376.5 L513.6,385.9 L512.8,395.4 L514.3,404.8 L518.4,413.6 L524.9,421.7 L533.8,428.8 L544.8,434.7 L557.7,439.0 L572.1,441.7 L587.5,442.6 L875.3,442.6 L890.8,441.7 L905.6,439.0 L919.1,434.7 L930.9,428.8 L940.7,421.7 L948.3,413.6 L953.6,404.8 L956.5,395.4 L956.9,385.9 L955.1,376.5 Z" clip-path="url(#cr)" stroke-dasharray="none" stroke="#28d028"/>
</g>
<g fill="none" stroke="#20b820" stroke-width="1.2" stroke-dasharray="2,1" clip-path="url(#c0)">
<path d="M754.7,235.5 L754.7,235.5 L754.7,235.5 L754.7,235.5 L754.7,235.5 L754.7,235.5 L754.7,235.5 L737.7,235.5 L737.7,235.5 L737.7,235.5 L737.7,235.5 L737.7,235.5 L737.7,235.5 L737.7,235.5 L730.4,319.1 L730.4,319.1 L730.4,319.1 L730.4,319.1 L730.4,319.1 L730.4,319.1 L730.4,319.1 L750.7,319.1 L750.7,319.1 L750.7,319.1 L750.7,319.1 L750.7,319.1 L750.7,319.1 L750.7,319.1 Z"/>
<path d="M770.7,227.7 L770.7,227.7 L770.7,227.7 L770.7,227.7 L770.7,227.7 L770.7,227.7 L770.7,227.7 L722.7,227.7 L722.7,227.7 L722.7,227.7 L722.7,227.7 L722.7,227.7 L722.7,227.7 L722.7,227.7 L710.0,330.6 L710.0,330.6 L710.0,330.6 L710.0,330.6 L710.0,330.6 L710.0,330.6 L710.0,330.6 L769.5,330.6 L769.5,330.6 L769.5,330.6 L769.5,330.6 L769.5,330.6 L769.5,330.6 L769.5,330.6 Z"/>
<path d="M786.2,223.9 L785.9,223.0 L785.1,222.1 L783.9,221.3 L782.3,220.7 L780.4,220.3 L778.4,220.2 L716.0,220.2 L714.0,220.3 L712.1,220.7 L710.4,221.3 L709.1,222.1 L708.1,223.0 L707.7,223.9 L688.8,342.6 L688.8,342.6 L688.8,342.6 L688.8,342.6 L688.8,342.6 L688.8,342.6 L688.8,342.6 L789.1,342.6 L789.1,342.6 L789.1,342.6 L789.1,342.6 L789.1,342.6 L789.1,342.6 L789.1,342.6 Z"/>
<path d="M801.7,223.9 L800.7,221.0 L798.2,218.4 L794.5,216.1 L789.7,214.4 L784.2,213.3 L778.4,213.0 L717.0,213.0 L711.1,213.3 L705.5,214.4 L700.5,216.1 L696.4,218.4 L693.6,221.0 L692.2,223.9 L666.5,355.1 L666.5,355.1 L666.5,355.1 L666.5,355.1 L666.5,355.1 L666.5,355.1 L666.5,355.1 L809.7,355.1 L809.7,355.1 L809.7,355.1 L809.7,355.1 L809.7,355.1 L809.7,355.1 L809.7,355.1 Z"/>
<path d="M817.1,223.9 L815.4,219.1 L811.2,214.8 L804.9,211.1 L797.0,208.3 L787.9,206.6 L778.3,206.0 L718.0,206.0 L708.3,206.6 L699.0,208.3 L690.8,211.1 L684.0,214.8 L679.2,219.1 L676.8,223.9 L643.2,368.2 L643.2,368.2 L643.2,368.2 L643.2,368.2 L643.2,368.2 L643.2,368.2 L643.2,368.2 L831.2,368.2 L831.2,368.2 L831.2,368.2 L831.2,368.2 L831.2,368.2 L831.2,368.2 L831.2,368.2 Z"/>
<path d="M832.6,223.9 L829.9,217.2 L823.9,211.2 L815.0,206.1 L804.0,202.4 L791.5,200.0 L778.3,199.2 L719.0,199.2 L705.6,200.0 L692.8,202.4 L681.3,206.1 L671.8,211.2 L664.9,217.2 L661.3,223.9 L618.8,382.0 L618.8,382.0 L618.8,382.0 L618.8,382.0 L618.8,382.0 L618.8,382.0 L618.8,382.0 L853.8,382.0 L853.8,382.0 L853.8,382.0 L853.8,382.0 L853.8,382.0 L853.8,382.0 L853.8,382.0 Z"/>
<path d="M848.1,223.9 L844.3,215.4 L836.3,207.7 L824.9,201.3 L810.8,196.6 L795.0,193.7 L778.2,192.7 L719.9,192.7 L703.0,193.7 L686.7,196.6 L672.0,201.3 L659.8,207.7 L650.8,215.4 L645.8,223.9 L593.2,396.5 L593.2,396.5 L593.2,396.5 L593.2,396.5 L593.2,396.5 L593.2,396.5 L593.2,396.5 L877.4,396.5 L877.4,396.5 L877.4,396.5 L877.4,396.5 L877.4,396.5 L877.4,396.5 L877.4,396.5 Z"/>
<path d="M863.5,223.9 L858.6,213.5 L848.6,204.3 L834.6,196.6 L817.5,191.0 L798.3,187.5 L778.2,186.3 L720.8,186.3 L700.5,187.5 L680.9,191.0 L663.0,196.6 L648.0,204.3 L636.7,213.5 L630.4,223.9 L566.3,411.6 L566.3,411.6 L566.3,411.6 L566.3,411.6 L566.3,411.6 L566.3,411.6 L566.3,411.6 L902.3,411.6 L902.3,411.6 L902.3,411.6 L902.3,411.6 L902.3,411.6 L902.3,411.6 L902.3,411.6 Z"/>
<path d="M879.0,223.9 L872.7,211.7 L860.7,200.9 L844.0,192.0 L823.9,185.5 L801.6,181.5 L778.2,180.2 L721.6,180.2 L698.0,181.5 L675.1,185.5 L654.2,192.0 L636.3,200.9 L622.9,211.7 L614.9,223.9 L537.9,427.6 L537.9,427.6 L537.9,427.6 L537.9,427.6 L537.9,427.6 L537.9,427.6 L537.9,427.6 L928.5,427.6 L928.5,427.6 L928.5,427.6 L928.5,427.6 L928.5,427.6 L928.5,427.6 L928.5,427.6 Z"/>
<polyline points="750.7,319.1 769.5,330.6 789.1,342.6 809.7,355.1 831.2,368.2 853.8,382.0 877.4,396.5 902.3,411.6 928.5,427.6"/>
</g>
<g fill="none" stroke="#b81a1a" stroke-width="1.2">
<polyline points="461,405 914,372"/>
<polyline points="546,398.4 682,398.8"/>
<polyline points="547,408.7 775,399.3 775,452.7"/>
<polyline points="544.6,394.6 748,267 748,318"/>
<polyline points="682,398.8 689,452" stroke="#22c022"/>
</g>
<path d="M410.0,466.0 H1033.0 M410.0,466.0 V470.5 L416.0,466.0 M416.0,466.0 V470.5 L422.0,466.0 M422.0,466.0 V470.5 L428.0,466.0 M428.0,466.0 V470.5 L434.0,466.0 M434.0,466.0 V470.5 L440.0,466.0 M440.0,466.0 V470.5 L446.0,466.0 M446.0,466.0 V470.5 L452.0,466.0 M452.0,466.0 V470.5 L458.0,466.0 M458.0,466.0 V470.5 L464.0,466.0 M464.0,466.0 V470.5 L470.0,466.0 M470.0,466.0 V470.5 L476.0,466.0 M476.0,466.0 V470.5 L482.0,466.0 M482.0,466.0 V470.5 L488.0,466.0 M488.0,466.0 V470.5 L494.0,466.0 M494.0,466.0 V470.5 L500.0,466.0 M500.0,466.0 V470.5 L506.0,466.0 M506.0,466.0 V470.5 L512.0,466.0 M512.0,466.0 V470.5 L518.0,466.0 M518.0,466.0 V470.5 L524.0,466.0 M524.0,466.0 V470.5 L530.0,466.0 M530.0,466.0 V470.5 L536.0,466.0 M536.0,466.0 V470.5 L542.0,466.0 M542.0,466.0 V470.5 L548.0,466.0 M548.0,466.0 V470.5 L554.0,466.0 M554.0,466.0 V470.5 L560.0,466.0 M560.0,466.0 V470.5 L566.0,466.0 M566.0,466.0 V470.5 L572.0,466.0 M572.0,466.0 V470.5 L578.0,466.0 M578.0,466.0 V470.5 L584.0,466.0 M584.0,466.0 V470.5 L590.0,466.0 M590.0,466.0 V470.5 L596.0,466.0 M596.0,466.0 V470.5 L602.0,466.0 M602.0,466.0 V470.5 L608.0,466.0 M608.0,466.0 V470.5 L614.0,466.0 M614.0,466.0 V470.5 L620.0,466.0 M620.0,466.0 V470.5 L626.0,466.0 M626.0,466.0 V470.5 L632.0,466.0 M632.0,466.0 V470.5 L638.0,466.0 M638.0,466.0 V470.5 L644.0,466.0 M644.0,466.0 V470.5 L650.0,466.0 M650.0,466.0 V470.5 L656.0,466.0 M656.0,466.0 V470.5 L662.0,466.0 M662.0,466.0 V470.5 L668.0,466.0 M668.0,466.0 V470.5 L674.0,466.0 M674.0,466.0 V470.5 L680.0,466.0 M680.0,466.0 V470.5 L686.0,466.0 M686.0,466.0 V470.5 L692.0,466.0 M692.0,466.0 V470.5 L698.0,466.0 M698.0,466.0 V470.5 L704.0,466.0 M704.0,466.0 V470.5 L710.0,466.0 M710.0,466.0 V470.5 L716.0,466.0 M716.0,466.0 V470.5 L722.0,466.0 M722.0,466.0 V470.5 L728.0,466.0 M728.0,466.0 V470.5 L734.0,466.0 M734.0,466.0 V470.5 L740.0,466.0 M740.0,466.0 V470.5 L746.0,466.0 M746.0,466.0 V470.5 L752.0,466.0 M752.0,466.0 V470.5 L758.0,466.0 M758.0,466.0 V470.5 L764.0,466.0 M764.0,466.0 V470.5 L770.0,466.0 M770.0,466.0 V470.5 L776.0,466.0 M776.0,466.0 V470.5 L782.0,466.0 M782.0,466.0 V470.5 L788.0,466.0 M788.0,466.0 V470.5 L794.0,466.0 M794.0,466.0 V470.5 L800.0,466.0 M800.0,466.0 V470.5 L806.0,466.0 M806.0,466.0 V470.5 L812.0,466.0 M812.0,466.0 V470.5 L818.0,466.0 M818.0,466.0 V470.5 L824.0,466.0 M824.0,466.0 V470.5 L830.0,466.0 M830.0,466.0 V470.5 L836.0,466.0 M836.0,466.0 V470.5 L842.0,466.0 M842.0,466.0 V470.5 L848.0,466.0 M848.0,466.0 V470.5 L854.0,466.0 M854.0,466.0 V470.5 L860.0,466.0 M860.0,466.0 V470.5 L866.0,466.0 M866.0,466.0 V470.5 L872.0,466.0 M872.0,466.0 V470.5 L878.0,466.0 M878.0,466.0 V470.5 L884.0,466.0 M884.0,466.0 V470.5 L890.0,466.0 M890.0,466.0 V470.5 L896.0,466.0 M896.0,466.0 V470.5 L902.0,466.0 M902.0,466.0 V470.5 L908.0,466.0 M908.0,466.0 V470.5 L914.0,466.0 M914.0,466.0 V470.5 L920.0,466.0 M920.0,466.0 V470.5 L926.0,466.0 M926.0,466.0 V470.5 L932.0,466.0 M932.0,466.0 V470.5 L938.0,466.0 M938.0,466.0 V470.5 L944.0,466.0 M944.0,466.0 V470.5 L950.0,466.0 M950.0,466.0 V470.5 L956.0,466.0 M956.0,466.0 V470.5 L962.0,466.0 M962.0,466.0 V470.5 L968.0,466.0 M968.0,466.0 V470.5 L974.0,466.0 M974.0,466.0 V470.5 L980.0,466.0 M980.0,466.0 V470.5 L986.0,466.0 M986.0,466.0 V470.5 L992.0,466.0 M992.0,466.0 V470.5 L998.0,466.0 M998.0,466.0 V470.5 L1004.0,466.0 M1004.0,466.0 V470.5 L1010.0,466.0 M1010.0,466.0 V470.5 L1016.0,466.0 M1016.0,466.0 V470.5 L1022.0,466.0 M1022.0,466.0 V470.5 L1028.0,466.0" fill="none" stroke="#7aa8de" stroke-width="0.9"/>
<path d="M545.0,418.0 H925.0 M545.0,418.0 V422.5 L551.0,418.0 M551.0,418.0 V422.5 L557.0,418.0 M557.0,418.0 V422.5 L563.0,418.0 M563.0,418.0 V422.5 L569.0,418.0 M569.0,418.0 V422.5 L575.0,418.0 M575.0,418.0 V422.5 L581.0,418.0 M581.0,418.0 V422.5 L587.0,418.0 M587.0,418.0 V422.5 L593.0,418.0 M593.0,418.0 V422.5 L599.0,418.0 M599.0,418.0 V422.5 L605.0,418.0 M605.0,418.0 V422.5 L611.0,418.0 M611.0,418.0 V422.5 L617.0,418.0 M617.0,418.0 V422.5 L623.0,418.0 M623.0,418.0 V422.5 L629.0,418.0 M629.0,418.0 V422.5 L635.0,418.0 M635.0,418.0 V422.5 L641.0,418.0 M641.0,418.0 V422.5 L647.0,418.0 M647.0,418.0 V422.5 L653.0,418.0 M653.0,418.0 V422.5 L659.0,418.0 M659.0,418.0 V422.5 L665.0,418.0 M665.0,418.0 V422.5 L671.0,418.0 M671.0,418.0 V422.5 L677.0,418.0 M677.0,418.0 V422.5 L683.0,418.0 M683.0,418.0 V422.5 L689.0,418.0 M689.0,418.0 V422.5 L695.0,418.0 M695.0,418.0 V422.5 L701.0,418.0 M701.0,418.0 V422.5 L707.0,418.0 M707.0,418.0 V422.5 L713.0,418.0 M713.0,418.0 V422.5 L719.0,418.0 M719.0,418.0 V422.5 L725.0,418.0 M725.0,418.0 V422.5 L731.0,418.0 M731.0,418.0 V422.5 L737.0,418.0 M737.0,418.0 V422.5 L743.0,418.0 M743.0,418.0 V422.5 L749.0,418.0 M749.0,418.0 V422.5 L755.0,418.0 M755.0,418.0 V422.5 L761.0,418.0 M761.0,418.0 V422.5 L767.0,418.0 M767.0,418.0 V422.5 L773.0,418.0 M773.0,418.0 V422.5 L779.0,418.0 M779.0,418.0 V422.5 L785.0,418.0 M785.0,418.0 V422.5 L791.0,418.0 M791.0,418.0 V422.5 L797.0,418.0 M797.0,418.0 V422.5 L803.0,418.0 M803.0,418.0 V422.5 L809.0,418.0 M809.0,418.0 V422.5 L815.0,418.0 M815.0,418.0 V422.5 L821.0,418.0 M821.0,418.0 V422.5 L827.0,418.0 M827.0,418.0 V422.5 L833.0,418.0 M833.0,418.0 V422.5 L839.0,418.0 M839.0,418.0 V422.5 L845.0,418.0 M845.0,418.0 V422.5 L851.0,418.0 M851.0,418.0 V422.5 L857.0,418.0 M857.0,418.0 V422.5 L863.0,418.0 M863.0,418.0 V422.5 L869.0,418.0 M869.0,418.0 V422.5 L875.0,418.0 M875.0,418.0 V422.5 L881.0,418.0 M881.0,418.0 V422.5 L887.0,418.0 M887.0,418.0 V422.5 L893.0,418.0 M893.0,418.0 V422.5 L899.0,418.0 M899.0,418.0 V422.5 L905.0,418.0 M905.0,418.0 V422.5 L911.0,418.0 M911.0,418.0 V422.5 L917.0,418.0 M917.0,418.0 V422.5 L923.0,418.0" fill="none" stroke="#7aa8de" stroke-width="0.9"/>
<path d="M541.0,442.5 H703.0 M541.0,442.5 V447.0 L547.0,442.5 M547.0,442.5 V447.0 L553.0,442.5 M553.0,442.5 V447.0 L559.0,442.5 M559.0,442.5 V447.0 L565.0,442.5 M565.0,442.5 V447.0 L571.0,442.5 M571.0,442.5 V447.0 L577.0,442.5 M577.0,442.5 V447.0 L583.0,442.5 M583.0,442.5 V447.0 L589.0,442.5 M589.0,442.5 V447.0 L595.0,442.5 M595.0,442.5 V447.0 L601.0,442.5 M601.0,442.5 V447.0 L607.0,442.5 M607.0,442.5 V447.0 L613.0,442.5 M613.0,442.5 V447.0 L619.0,442.5 M619.0,442.5 V447.0 L625.0,442.5 M625.0,442.5 V447.0 L631.0,442.5 M631.0,442.5 V447.0 L637.0,442.5 M637.0,442.5 V447.0 L643.0,442.5 M643.0,442.5 V447.0 L649.0,442.5 M649.0,442.5 V447.0 L655.0,442.5 M655.0,442.5 V447.0 L661.0,442.5 M661.0,442.5 V447.0 L667.0,442.5 M667.0,442.5 V447.0 L673.0,442.5 M673.0,442.5 V447.0 L679.0,442.5 M679.0,442.5 V447.0 L685.0,442.5 M685.0,442.5 V447.0 L691.0,442.5 M691.0,442.5 V447.0 L697.0,442.5 M697.0,442.5 V447.0 L703.0,442.5" fill="none" stroke="#7aa8de" stroke-width="0.9"/>
<path d="M765.0,442.5 H915.0 M765.0,442.5 V447.0 L771.0,442.5 M771.0,442.5 V447.0 L777.0,442.5 M777.0,442.5 V447.0 L783.0,442.5 M783.0,442.5 V447.0 L789.0,442.5 M789.0,442.5 V447.0 L795.0,442.5 M795.0,442.5 V447.0 L801.0,442.5 M801.0,442.5 V447.0 L807.0,442.5 M807.0,442.5 V447.0 L813.0,442.5 M813.0,442.5 V447.0 L819.0,442.5 M819.0,442.5 V447.0 L825.0,442.5 M825.0,442.5 V447.0 L831.0,442.5 M831.0,442.5 V447.0 L837.0,442.5 M837.0,442.5 V447.0 L843.0,442.5 M843.0,442.5 V447.0 L849.0,442.5 M849.0,442.5 V447.0 L855.0,442.5 M855.0,442.5 V447.0 L861.0,442.5 M861.0,442.5 V447.0 L867.0,442.5 M867.0,442.5 V447.0 L873.0,442.5 M873.0,442.5 V447.0 L879.0,442.5 M879.0,442.5 V447.0 L885.0,442.5 M885.0,442.5 V447.0 L891.0,442.5 M891.0,442.5 V447.0 L897.0,442.5 M897.0,442.5 V447.0 L903.0,442.5 M903.0,442.5 V447.0 L909.0,442.5 M909.0,442.5 V447.0 L915.0,442.5" fill="none" stroke="#7aa8de" stroke-width="0.9"/>
<g fill="none" stroke="#22cc22" stroke-width="1" stroke-dasharray="1.5,3">
<path d="M530,461.8 H1000"/><path d="M545,426.8 H925"/>
</g>
<g stroke="#74787e" stroke-width="1.2" fill="none"><polyline points="408,471.5 588,142 908,142 1035,471.5 1010,543.5 443,543.5 408,471.5"/></g>
<defs><linearGradient id="cylg" gradientUnits="userSpaceOnUse" x1="447.6" y1="194.0" x2="487.4" y2="187.0"><stop offset="0" stop-color="#f59200"/><stop offset="0.3" stop-color="#ffa300"/><stop offset="0.65" stop-color="#fc9500"/><stop offset="1" stop-color="#e27000"/></linearGradient></defs>
<polygon points="447.6,194.0 509.1,415.0 548.9,408.0 487.4,187.0" fill="url(#cylg)"/>
<ellipse cx="529.0" cy="411.5" rx="20.2" ry="8.2" transform="rotate(-9.0 529.0 411.5)" fill="url(#cylg)"/>
<ellipse cx="467.5" cy="190.5" rx="20.2" ry="8.2" transform="rotate(-9.0 467.5 190.5)" fill="#fb9800"/>
<g stroke-linecap="butt">
<line x1="470.6" y1="437.7" x2="485" y2="471" stroke="#2020ff" stroke-width="2.6" stroke-dasharray="1.6,1.4"/>
<line x1="421" y1="437.7" x2="520" y2="437.7" stroke="#ff1c1c" stroke-width="3.2"/>
<polygon points="415,437.7 423,433.5 423,442" fill="#ff1c1c"/><polygon points="526.5,437.7 518.5,433.5 518.5,442" fill="#ff1c1c"/>
<line x1="470.6" y1="437.7" x2="457" y2="404" stroke="#1818ff" stroke-width="4"/>
<polygon points="454.5,398.5 450.8,406.5 460.5,404" fill="#1818ff"/>
<line x1="452.5" y1="475.5" x2="487" y2="404.5" stroke="#20e020" stroke-width="4"/>
<polygon points="447.5,475 456.5,476.5 451,481" fill="#20e020"/><circle cx="488.2" cy="402.5" r="2.6" fill="#20e020"/>
</g>
</svg>
<span class="t u" style="left:269px;top:634px;letter-spacing:-0.3px">Position</span>
<div class="a" style="left:345px;top:635px;width:723px;height:4px;background:#e7eaea;border:1px solid #d6d6d6"></div>
<span class="t u" style="left:266px;top:667px;letter-spacing:-0.3px">Progress</span>
<div class="a" style="left:337px;top:659px;width:731px;height:24px;background:#e6e6e6;border:1px solid #bcbcbc"></div>
</body></html>
